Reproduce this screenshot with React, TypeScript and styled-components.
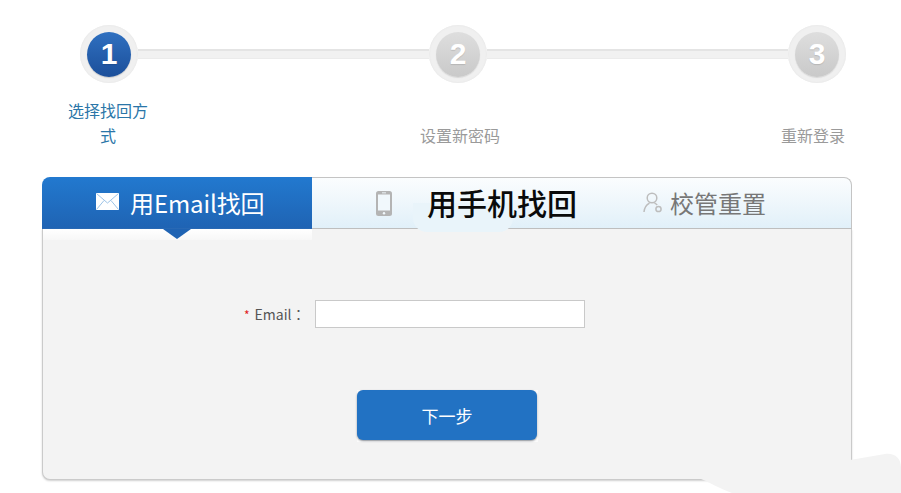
import React from "react";
import styled, { createGlobalStyle } from "styled-components";

const Global = createGlobalStyle`
  html, body { margin: 0; padding: 0; background: #fff; overflow: hidden; }
  body { font-family: "Noto Sans CJK SC", "Liberation Sans", sans-serif; }
`;

const Page = styled.div`
  position: relative;
  width: 901px;
  height: 493px;
  overflow: hidden;
  padding-top: 25px;
  box-sizing: border-box;
`;

const Track = styled.div`
  display: flex;
  align-items: center;
  padding-left: 80px;
  height: 58px;
`;

const Ring = styled.div`
  flex: none;
  width: 58px;
  height: 58px;
  border-radius: 50%;
  background: #f0f0f0;
  box-shadow: inset 0 0 2px #e2e2e2;
  display: flex;
  align-items: center;
  justify-content: center;
`;

const Disc = styled.div<{ $active?: boolean }>`
  width: 44px;
  height: 45px;
  border-radius: 50%;
  background: ${(p) =>
    p.$active ? "linear-gradient(#2f70c0, #1c4f9a)" : "linear-gradient(#dedede, #c9c9c9)"};
  box-shadow: ${(p) => (p.$active ? "0 1px 1px #c9c9c9" : "0 1px 1px #d8d8d8")};
  color: #fff;
  font: bold 30px/43px "Liberation Sans", Arial, sans-serif;
  text-align: center;
  text-shadow: 0 1px 1px rgba(0, 0, 0, 0.12);
`;

const Line = styled.div<{ $width: number }>`
  flex: none;
  width: ${(p) => p.$width}px;
  height: 10px;
  box-sizing: border-box;
  background: #f1f1f1;
  border-top: 2px solid #e4e4e4;
  border-bottom: 1px solid #ebebeb;
`;

const Labels = styled.div`
  display: grid;
  grid-template-columns: 352px 361px auto;
  align-items: end;
  padding-left: 68px;
  margin-top: 15px;
`;

const Label = styled.div<{ $active?: boolean }>`
  width: ${(p) => (p.$active ? "80px" : "auto")};
  font-size: 16px;
  line-height: 25px;
  text-align: ${(p) => (p.$active ? "center" : "left")};
  color: ${(p) => (p.$active ? "#2a76a8" : "#9a9a9a")};
`;

const Card = styled.div`
  width: 810px;
  height: 303px;
  margin: 29px 0 0 42px;
  display: flex;
  flex-direction: column;
`;

const Tabs = styled.div`
  display: flex;
  flex: none;
  height: 52px;
`;

const ActiveTab = styled.div`
  flex: none;
  width: 270px;
  display: flex;
  align-items: center;
  padding-left: 54px;
  box-sizing: border-box;
  gap: 11px;
  background: linear-gradient(#2279cf, #1f63b3);
  border-radius: 8px 0 0 0;
  color: #fff;
  font-size: 24px;
  line-height: 1;
  letter-spacing: -0.1px;
`;

const RestTabs = styled.div`
  flex: 1;
  display: flex;
  align-items: center;
  gap: 66px;
  padding-left: 64px;
  background: linear-gradient(#fbfdfe, #e1f0f9);
  border: 1px solid #c4c4c4;
  border-left: 0;
  border-bottom-color: #bdbdbd;
  border-radius: 0 8px 0 0;
`;

const TabItem = styled.div<{ $gap: number }>`
  display: flex;
  align-items: center;
  gap: ${(p) => p.$gap}px;
`;

const PlainTitle = styled.span`
  font-size: 24px;
  line-height: 1;
  color: #777;
`;

const StrongTitle = styled.span`
  position: relative;
  font-size: 30px;
  line-height: 1;
  font-weight: 500;
  color: #0a0a0a;
  margin-top: -2px;
  &::before {
    content: "";
    position: absolute;
    left: -14px;
    top: 16px;
    width: 100px;
    height: 29px;
    border-radius: 0 0 14px 14px;
    background: #e9f4fa;
  }
`;

const TitleText = styled.span`
  position: relative;
`;

const Panel = styled.div`
  flex: 1;
  display: flex;
  flex-direction: column;
  box-sizing: border-box;
  background: #f3f3f3;
  border: 1px solid #cacaca;
  border-top: 0;
  border-radius: 0 0 8px 8px;
  box-shadow: 0 1px 2px #d0d0d0;
`;

const Notch = styled.div`
  position: relative;
  flex: none;
  width: 269px;
  height: 11px;
  background: linear-gradient(#ffffff, #f7f7f7);
  &::after {
    content: "";
    position: absolute;
    left: 120px;
    top: 0;
    border-style: solid;
    border-width: 10px 14px 0;
    border-color: #1f63b3 transparent transparent;
  }
`;

const FormRow = styled.div`
  display: flex;
  align-items: center;
  margin-top: 60px;
  padding-left: 201px;
`;

const FieldLabel = styled.label`
  width: 71px;
  font-family: "Noto Sans CJK TC", "Noto Sans CJK SC", sans-serif;
  font-size: 14px;
  color: #555;
  white-space: nowrap;
`;

const Req = styled.span`
  color: #e02020;
  font-size: 12px;
  margin-right: 5px;
`;

const Input = styled.input`
  width: 270px;
  height: 28px;
  box-sizing: border-box;
  border: 1px solid #c9c9c9;
  background: #fff;
  outline: none;
`;

const ButtonFrame = styled.div`
  width: 181px;
  height: 52px;
  margin: 62px 0 0 314px;
  background: #fbfbfb;
`;

const NextButton = styled.button`
  display: block;
  width: 180px;
  height: 50px;
  border: 0;
  border-radius: 6px;
  background: #2272c3;
  box-shadow: 0 1px 2px #8a8f96;
  color: #fff;
  font-family: inherit;
  font-size: 17px;
  padding: 0;
`;

const Smudge = styled.svg`
  position: absolute;
  left: 690px;
  top: 450px;
  width: 211px;
  height: 43px;
`;

const Mail = () => (
  <svg width="23" height="17" viewBox="0 0 23 17" style={{ marginTop: -4 }}>
    <rect x="0" y="0" width="23" height="17" fill="#fff" />
    <path d="M0.5 0.5 L11.5 10 L22.5 0.5 M0.5 16.5 L8 7.5 M22.5 16.5 L15 7.5" fill="none" stroke="#9cc3e6" strokeWidth="1" />
  </svg>
);

const Phone = () => (
  <svg width="16" height="25" viewBox="0 0 16 25">
    <rect x="0" y="0" width="16" height="25" rx="2.5" fill="#b4b4b4" />
    <rect x="2" y="3.5" width="12" height="16" fill="#f1f8fc" />
    <circle cx="8" cy="22.2" r="1.2" fill="#f1f8fc" />
    <rect x="6" y="1.4" width="4" height="0.9" fill="#f1f8fc" />
  </svg>
);

const Person = () => (
  <svg width="20" height="22" viewBox="0 0 20 22" fill="none" stroke="#bdbdbd" strokeWidth="1.5">
    <circle cx="9" cy="6" r="4.8" />
    <path d="M1 20 C1.5 14.5 4 12.5 6.5 11.2 M11.5 11.2 C12.5 11.7 13.5 12.3 14.2 13" />
    <circle cx="15.5" cy="17" r="2.6" />
  </svg>
);

export default function App() {
  return (
    <Page>
      <Global />
      <Track>
        <Ring><Disc $active>1</Disc></Ring>
        <Line $width={291} />
        <Ring><Disc>2</Disc></Ring>
        <Line $width={301} />
        <Ring><Disc>3</Disc></Ring>
      </Track>
      <Labels>
        <Label $active>选择找回方式</Label>
        <Label>设置新密码</Label>
        <Label>重新登录</Label>
      </Labels>
      <Card>
        <Tabs>
          <ActiveTab>
            <Mail />
            <span>用Email找回</span>
          </ActiveTab>
          <RestTabs>
            <TabItem $gap={35}>
              <Phone />
              <StrongTitle><TitleText>用手机找回</TitleText></StrongTitle>
            </TabItem>
            <TabItem $gap={7}>
              <Person />
              <PlainTitle>校管重置</PlainTitle>
            </TabItem>
          </RestTabs>
        </Tabs>
        <Panel>
          <Notch />
          <FormRow>
            <FieldLabel><Req>*</Req>Email：</FieldLabel>
            <Input />
          </FormRow>
          <ButtonFrame>
            <NextButton>下一步</NextButton>
          </ButtonFrame>
        </Panel>
      </Card>
      <Smudge viewBox="0 0 211 43">
        <path d="M6 27 C20 32 30 39 42 43 L211 43 L211 18 C211 8 205 3 195 4 L160 10 L150 10 L150 27 Z" fill="#f3f3f3" />
      </Smudge>
    </Page>
  );
}
